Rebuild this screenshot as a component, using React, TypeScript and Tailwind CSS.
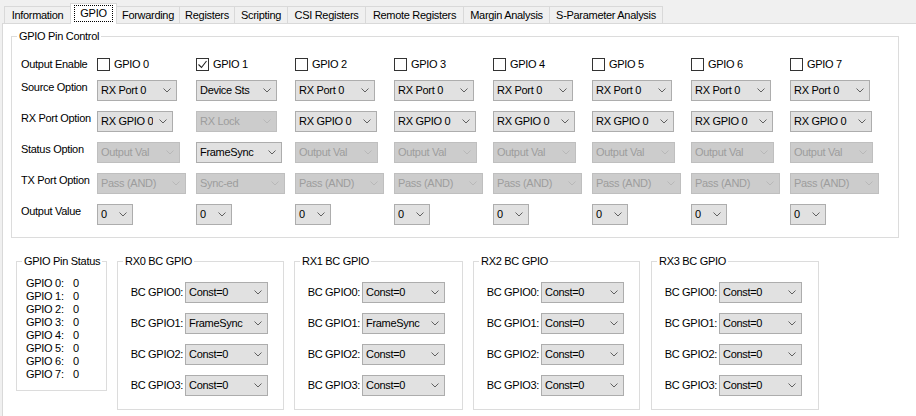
import clsx from "clsx";

interface GpioColumn {
  name: string;
  checked: boolean;
  source: string;
  sourceW: string;
  rx: string;
  rxW: string;
  rxDisabled: boolean;
  status: string;
  statusW: string;
  statusDisabled: boolean;
  tx: string;
}

const TABS = [
  { label: "Information", w: "w-[66px]" },
  { label: "GPIO", w: "w-[47px]", active: true },
  { label: "Forwarding", w: "w-[63px]" },
  { label: "Registers", w: "w-[55px]" },
  { label: "Scripting", w: "w-[53px]" },
  { label: "CSI Registers", w: "w-[78px]" },
  { label: "Remote Registers", w: "w-[98px]" },
  { label: "Margin Analysis", w: "w-[86px]" },
  { label: "S-Parameter Analysis", w: "w-[114px]", last: true },
];

const defaultCol = (i: number): GpioColumn => ({
  name: `GPIO ${i}`,
  checked: false,
  source: "RX Port 0",
  sourceW: "w-[80px]",
  rx: "RX GPIO 0",
  rxW: "w-[82px]",
  rxDisabled: false,
  status: "Output Val",
  statusW: "w-[83px]",
  statusDisabled: true,
  tx: "Pass (AND)",
});

const COLUMNS: GpioColumn[] = [
  { ...defaultCol(0), rxW: "w-[76px]" },
  {
    ...defaultCol(1),
    checked: true,
    source: "Device Sts",
    sourceW: "w-[81px]",
    rx: "RX Lock",
    rxW: "w-[81px]",
    rxDisabled: true,
    status: "FrameSync",
    statusW: "w-[86px]",
    statusDisabled: false,
    tx: "Sync-ed",
  },
  defaultCol(2),
  defaultCol(3),
  defaultCol(4),
  defaultCol(5),
  defaultCol(6),
  defaultCol(7),
];

const BC_BOXES = [
  { title: "RX0 BC GPIO", w: "w-[167px]", gap: "ml-[10px]", values: ["Const=0", "FrameSync", "Const=0", "Const=0"] },
  { title: "RX1 BC GPIO", w: "w-[169px]", gap: "ml-[10px]", values: ["Const=0", "FrameSync", "Const=0", "Const=0"] },
  { title: "RX2 BC GPIO", w: "w-[167px]", gap: "ml-[10px]", values: ["Const=0", "Const=0", "Const=0", "Const=0"] },
  { title: "RX3 BC GPIO", w: "w-[168px]", gap: "ml-[11px]", values: ["Const=0", "Const=0", "Const=0", "Const=0"] },
];

function Combo({ value, w, disabled }: { value: string; w: string; disabled?: boolean }) {
  return (
    <div
      className={clsx(
        "flex h-[21px] shrink-0 items-center border",
        w,
        disabled ? "border-[#bfbfbf] bg-[#cccccc] text-[#9d9d9d]" : "border-[#adadad] bg-[#e1e1e1] text-black"
      )}
    >
      <span className="flex-1 overflow-hidden whitespace-nowrap pl-[3px]">{value}</span>
      <span className="flex w-[19px] shrink-0 justify-center">
        <svg width="8" height="5" viewBox="0 0 8 5">
          <path d="M0.5 0.5 L4 4 L7.5 0.5" fill="none" stroke={disabled ? "#b8b8b8" : "#606060"} strokeWidth="1" />
        </svg>
      </span>
    </div>
  );
}

function Checkbox({ checked, label }: { checked: boolean; label: string }) {
  return (
    <div className="flex items-center gap-[4px]">
      <span className="flex h-[13px] w-[13px] items-center justify-center border border-[#333333] bg-white">
        {checked && (
          <svg width="11" height="11" viewBox="0 0 11 11">
            <path d="M1.5 5.5 L4.5 8.5 L9.5 2" fill="none" stroke="#222" strokeWidth="1.1" />
          </svg>
        )}
      </span>
      <span>{label}</span>
    </div>
  );
}

function Row({ label, first, children }: { label: string; first?: boolean; children: React.ReactNode }) {
  return (
    <div className={clsx("flex", first ? "h-[21px] items-center" : "items-start")}>
      <span className={clsx("w-[76px] shrink-0 whitespace-nowrap", !first && "mt-[1px]")}>{label}</span>
      {children}
    </div>
  );
}

function GroupBox({ title, className, children }: { title: string; className?: string; children: React.ReactNode }) {
  return (
    <fieldset className={clsx("border border-[#dcdcdc]", className)}>
      <legend className="ml-[5px] whitespace-nowrap px-[2px] leading-[13px]">{title}</legend>
      {children}
    </fieldset>
  );
}

export default function App() {
  return (
    <div className="h-[416px] w-[916px] overflow-hidden bg-[#f0f0f0] font-[Liberation_Sans,Arial,sans-serif] text-[11px] leading-[13px] tracking-[-0.3px] text-black">
      {/* Tabs */}
      <div className="flex h-[23px] items-end pl-[4px]">
        {TABS.map((t) =>
          t.active ? (
            <div
              key={t.label}
              className={clsx(
                "relative z-10 -mr-[1px] mb-[-1px] flex h-[21px] items-start justify-center border border-b-0 border-[#d9d9d9] bg-white pt-[1px]",
                t.w
              )}
            >
              <span className="flex h-[17px] w-[39px] items-center justify-center border border-dotted border-black">
                {t.label}
              </span>
            </div>
          ) : (
            <div
              key={t.label}
              className={clsx(
                "flex h-[17px] items-center justify-center whitespace-nowrap border-l border-t border-[#d9d9d9] bg-[#f0f0f0]",
                t.last && "border-r",
                t.w
              )}
            >
              {t.label}
            </div>
          )
        )}
      </div>

      {/* Page */}
      <div className="ml-[2px] h-[400px] border-l border-t border-[#d9d9d9] bg-white">
        {/* GPIO Pin Control */}
        <GroupBox title="GPIO Pin Control" className="ml-[8px] mt-[6px] w-[888px]">
          <div className="flex flex-col pb-[12px] pl-[9px] pt-[11px]">
            <Row label="Output Enable" first>
              {COLUMNS.map((c) => (
                <div key={c.name} className="w-[99px] shrink-0">
                  <Checkbox checked={c.checked} label={c.name} />
                </div>
              ))}
            </Row>
            <div className="mt-[5px]">
              <Row label="Source Option">
                {COLUMNS.map((c) => (
                  <div key={c.name} className="w-[99px] shrink-0">
                    <Combo value={c.source} w={c.sourceW} />
                  </div>
                ))}
              </Row>
            </div>
            <div className="mt-[10px]">
              <Row label="RX Port Option">
                {COLUMNS.map((c) => (
                  <div key={c.name} className="w-[99px] shrink-0">
                    <Combo value={c.rx} w={c.rxW} disabled={c.rxDisabled} />
                  </div>
                ))}
              </Row>
            </div>
            <div className="mt-[10px]">
              <Row label="Status Option">
                {COLUMNS.map((c) => (
                  <div key={c.name} className="w-[99px] shrink-0">
                    <Combo value={c.status} w={c.statusW} disabled={c.statusDisabled} />
                  </div>
                ))}
              </Row>
            </div>
            <div className="mt-[10px]">
              <Row label="TX Port Option">
                {COLUMNS.map((c) => (
                  <div key={c.name} className="w-[99px] shrink-0">
                    <Combo value={c.tx} w="w-[89px]" disabled />
                  </div>
                ))}
              </Row>
            </div>
            <div className="mt-[10px]">
              <Row label="Output Value">
                {COLUMNS.map((c) => (
                  <div key={c.name} className="w-[99px] shrink-0">
                    <Combo value="0" w="w-[36px]" />
                  </div>
                ))}
              </Row>
            </div>
          </div>
        </GroupBox>

        {/* Bottom groups */}
        <div className="ml-[13px] mt-[17px] flex items-start">
          <GroupBox title="GPIO Pin Status" className="w-[91px]">
            <div className="pb-[9px] pl-[9px] pt-[9px]">
              {[0, 1, 2, 3, 4, 5, 6, 7].map((i) => (
                <div key={i} className="flex h-[13px]">
                  <span className="w-[47px]">GPIO {i}:</span>
                  <span>0</span>
                </div>
              ))}
            </div>
          </GroupBox>

          {BC_BOXES.map((b) => (
            <GroupBox key={b.title} title={b.title} className={clsx(b.w, b.gap)}>
              <div className="flex flex-col gap-[10px] pb-[13px] pt-[14px]">
                {b.values.map((v, i) => (
                  <div key={i} className="flex h-[21px] items-center">
                    <span className="w-[67px] shrink-0 whitespace-nowrap pr-[2px] text-right">BC GPIO{i}:</span>
                    <Combo value={v} w="w-[83px]" />
                  </div>
                ))}
              </div>
            </GroupBox>
          ))}
        </div>
      </div>
    </div>
  );
}
